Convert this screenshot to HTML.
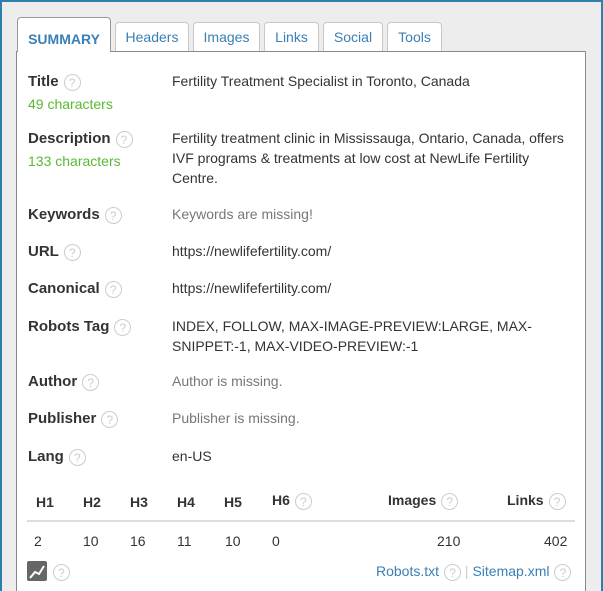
<!DOCTYPE html>
<html><head><style>
html,body{margin:0;width:603px;height:591px;overflow:hidden}
body{background:#ededed;font-family:"Liberation Sans",sans-serif;font-size:14px;color:#333;position:relative}
.frame{position:absolute;left:0;top:0;width:599px;height:589px;border:2px solid #2f7fae;border-bottom:none;}
.tab{position:absolute;top:22px;border:1px solid #c8c8c8;border-bottom:none;border-radius:4px 4px 0 0;background:#fff;color:#3a7fb5;text-align:center;line-height:29px;box-sizing:border-box;height:29px}
.sum{top:17px;height:35px;border-color:#999;font-weight:bold;line-height:42px;z-index:2;color:#3a7fb5}
.panel{position:absolute;left:16px;top:51px;width:570px;height:540px;background:#fff;border:1px solid #888;border-bottom:none;box-sizing:border-box}
.a{position:absolute;white-space:nowrap}
.l{left:28px;font-weight:bold;font-size:15px;line-height:20px}
.v{left:172px;line-height:20px}
.g{color:#5cb832;font-size:14px;font-weight:normal;line-height:24px}
.m{color:#777}
.q{display:inline-block;width:17px;height:17px;border:1px solid #ccc;border-radius:50%;color:#ccc;font-size:12px;line-height:16px;text-align:center;font-weight:normal;vertical-align:middle;margin-left:5px;box-sizing:border-box}
.h{font-weight:bold;font-size:14px}
.b{color:#3a7fb5}
</style></head><body>
<div class="frame"></div>
<div class="panel"></div>
<div class="tab sum" style="left:17px;width:94px">SUMMARY</div>
<div class="tab" style="left:115px;width:74px">Headers</div>
<div class="tab" style="left:193px;width:67px">Images</div>
<div class="tab" style="left:264px;width:55px">Links</div>
<div class="tab" style="left:323px;width:60px">Social</div>
<div class="tab" style="left:387px;width:55px">Tools</div>

<div class="a l" style="top:72px">Title<span class="q">?</span><br><span class="g">49 characters</span></div>
<div class="a v" style="top:71px">Fertility Treatment Specialist in Toronto, Canada</div>
<div class="a l" style="top:129px">Description<span class="q">?</span><br><span class="g">133 characters</span></div>
<div class="a v" style="top:128px">Fertility treatment clinic in Mississauga, Ontario, Canada, offers<br>IVF programs &amp; treatments at low cost at NewLife Fertility<br>Centre.</div>
<div class="a l" style="top:205px">Keywords<span class="q">?</span></div>
<div class="a v m" style="top:204px">Keywords are missing!</div>
<div class="a l" style="top:242px">URL<span class="q">?</span></div>
<div class="a v" style="top:241px">https://newlifefertility.com/</div>
<div class="a l" style="top:279px">Canonical<span class="q">?</span></div>
<div class="a v" style="top:278px">https://newlifefertility.com/</div>
<div class="a l" style="top:317px">Robots Tag<span class="q">?</span></div>
<div class="a v" style="top:316px">INDEX, FOLLOW, MAX-IMAGE-PREVIEW:LARGE, MAX-<br>SNIPPET:-1, MAX-VIDEO-PREVIEW:-1</div>
<div class="a l" style="top:372px">Author<span class="q">?</span></div>
<div class="a v m" style="top:371px">Author is missing.</div>
<div class="a l" style="top:409px">Publisher<span class="q">?</span></div>
<div class="a v m" style="top:408px">Publisher is missing.</div>
<div class="a l" style="top:447px">Lang<span class="q">?</span></div>
<div class="a v" style="top:446px">en-US</div>

<div class="a h" style="top:494px;left:36px">H1</div>
<div class="a h" style="top:494px;left:83px">H2</div>
<div class="a h" style="top:494px;left:130px">H3</div>
<div class="a h" style="top:494px;left:177px">H4</div>
<div class="a h" style="top:494px;left:224px">H5</div>
<div class="a h" style="top:492px;left:272px">H6<span class="q">?</span></div>
<div class="a h" style="top:492px;left:388px">Images<span class="q">?</span></div>
<div class="a h" style="top:492px;left:507px">Links<span class="q">?</span></div>
<div class="a" style="left:27px;top:520px;width:548px;height:2px;background:#ddd"></div>
<div class="a" style="top:533px;left:34px">2</div>
<div class="a" style="top:533px;left:83px">10</div>
<div class="a" style="top:533px;left:130px">16</div>
<div class="a" style="top:533px;left:177px">11</div>
<div class="a" style="top:533px;left:225px">10</div>
<div class="a" style="top:533px;left:272px">0</div>
<div class="a" style="top:533px;left:437px">210</div>
<div class="a" style="top:533px;left:544px">402</div>
<div class="a" style="top:561px;left:27px;width:20px;height:20px;background:#666;border-radius:2px"><svg width="20" height="20"><polyline points="3,17 8,11 12,13 17,5" fill="none" stroke="#fff" stroke-width="2"/></svg></div>
<div class="a" style="top:563px;left:48px"><span class="q">?</span></div>
<div class="a b" style="top:563px;left:376px">Robots.txt<span class="q">?</span> <span style="color:#ccc">|</span> Sitemap.xml<span class="q">?</span></div>
</body></html>
